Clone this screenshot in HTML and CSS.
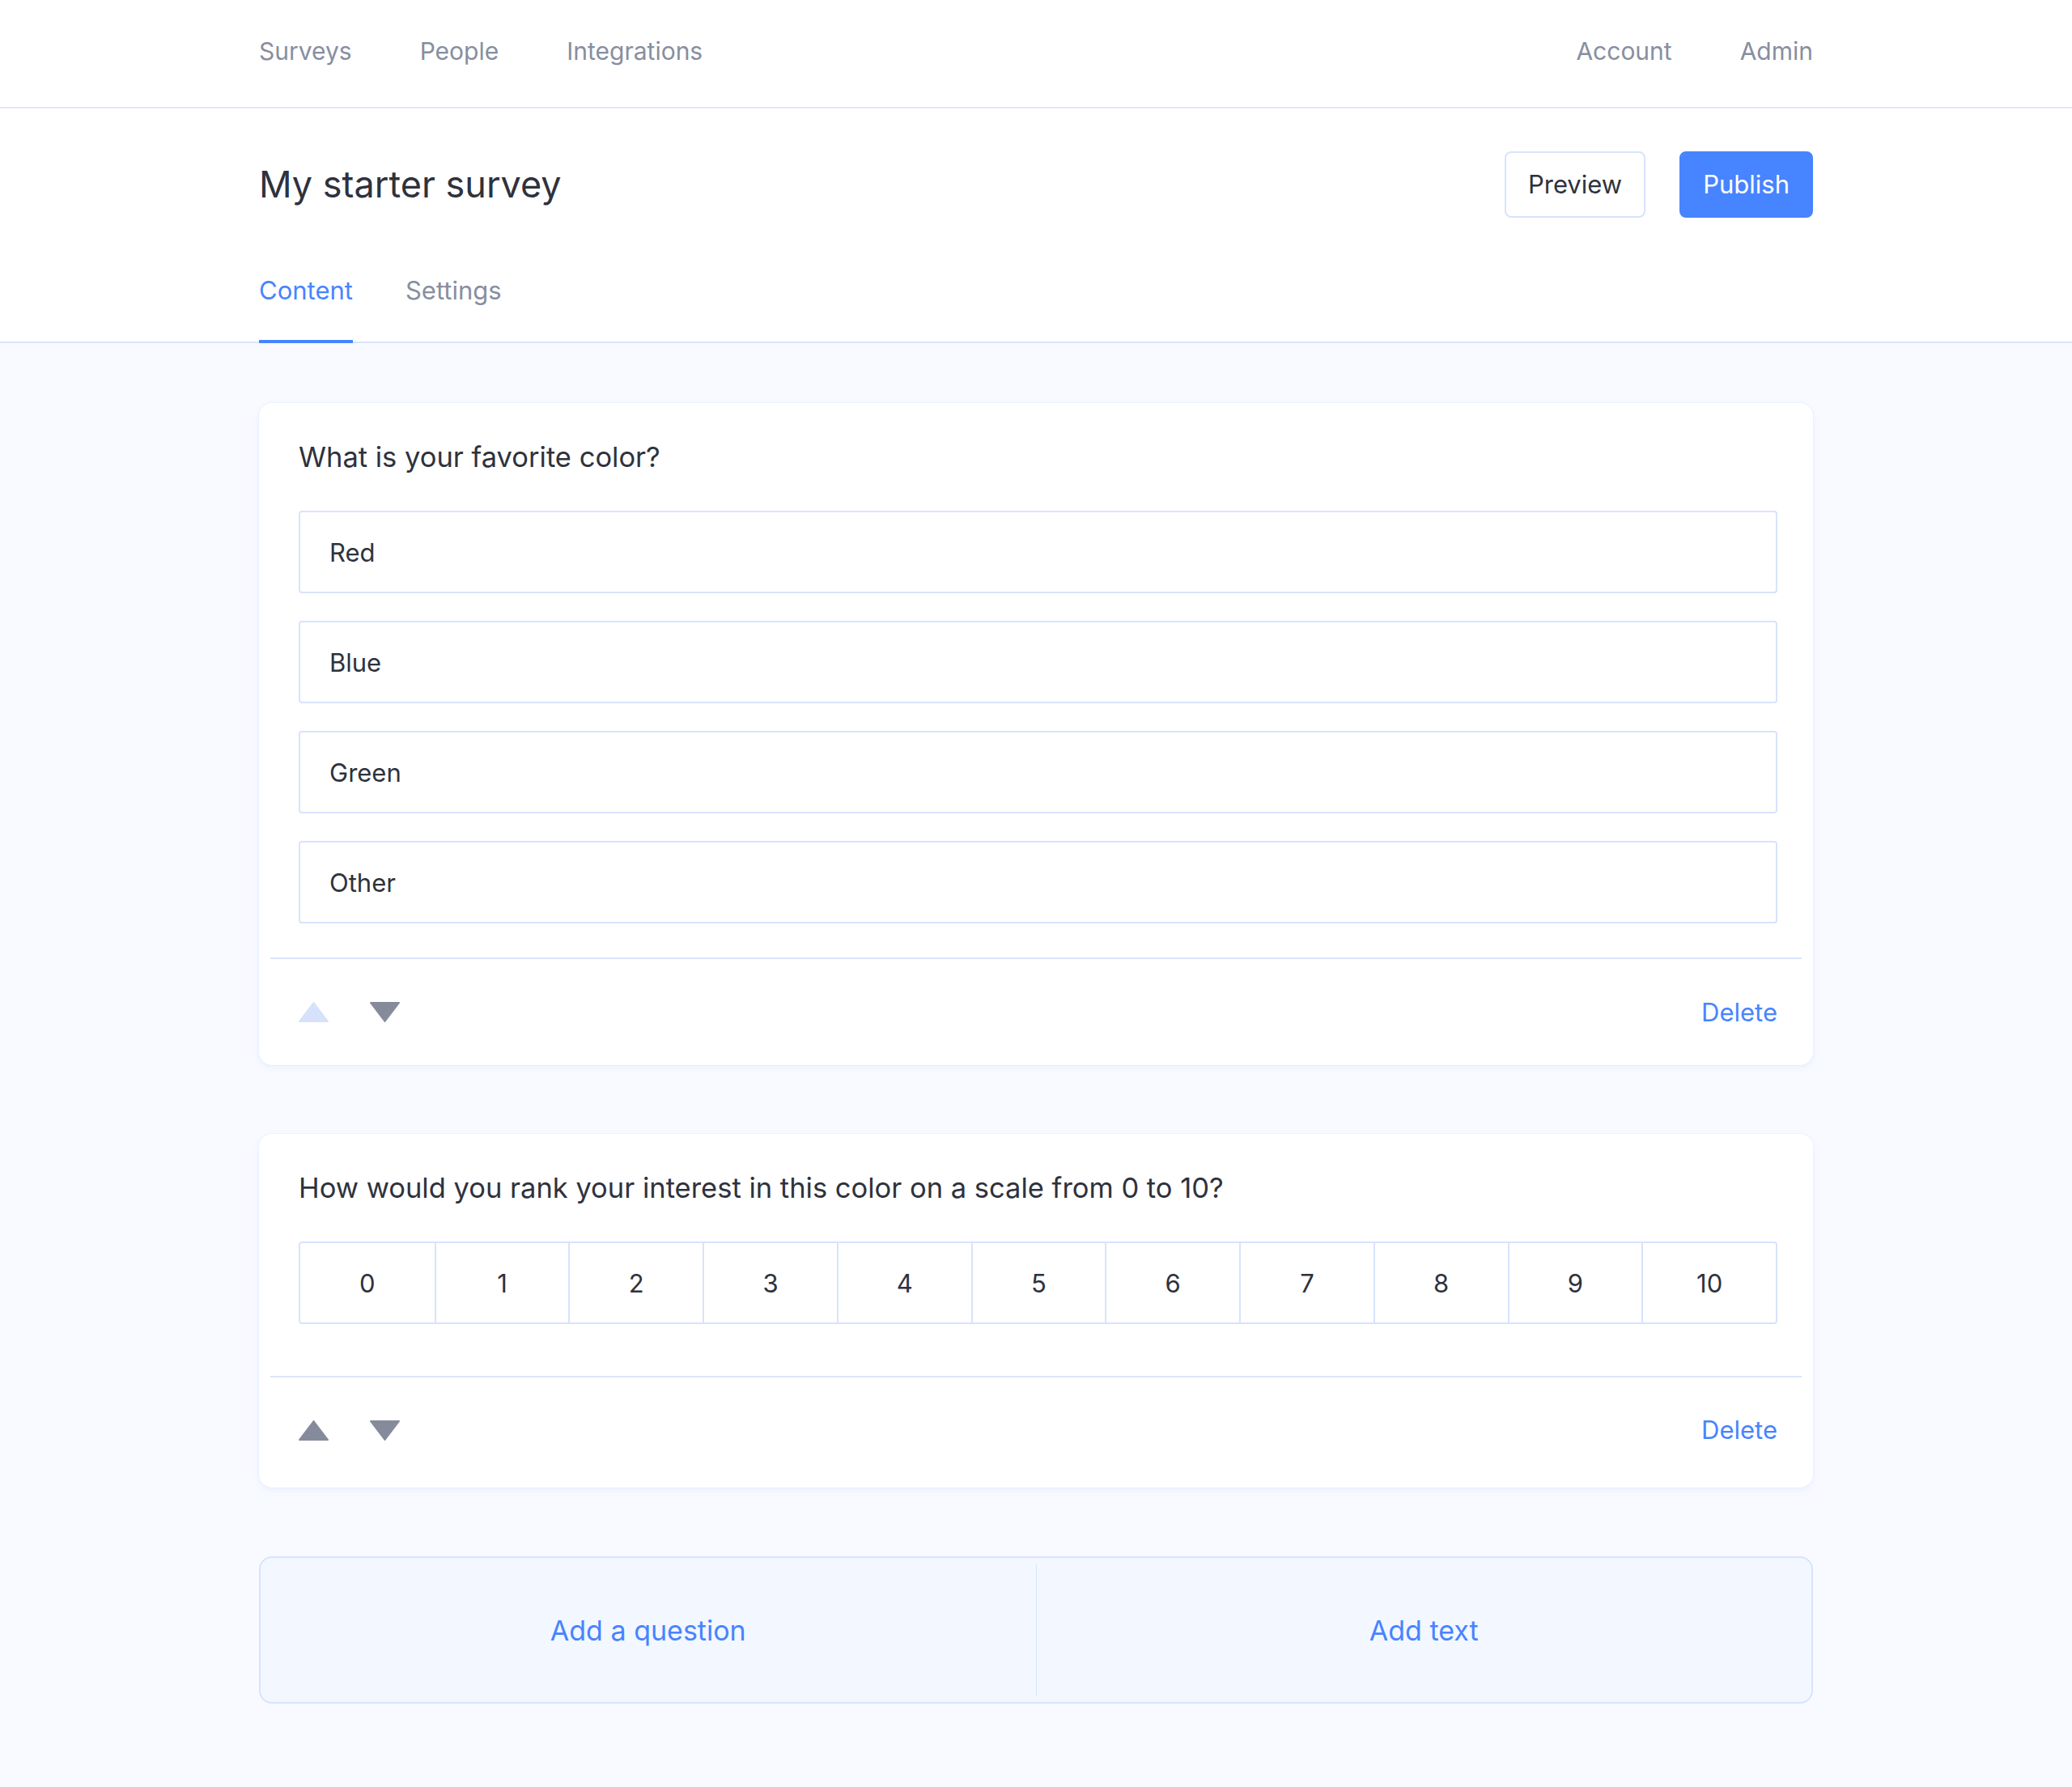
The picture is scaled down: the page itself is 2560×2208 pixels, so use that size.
FILE: index.html
```html
<!DOCTYPE html>
<html lang="en">
<head>
<meta charset="utf-8">
<title>My starter survey</title>
<link rel="stylesheet" href="styles.css">
</head>
<body>
<nav class="topnav">
  <div class="wrap nav-inner">
    <div class="nav-group">
      <a class="nav-link">Surveys</a>
      <a class="nav-link">People</a>
      <a class="nav-link">Integrations</a>
    </div>
    <div class="nav-group">
      <a class="nav-link">Account</a>
      <a class="nav-link">Admin</a>
    </div>
  </div>
</nav>

<header class="page-head">
  <div class="wrap">
    <div class="title-row">
      <h1 class="title">My starter survey</h1>
      <div class="actions">
        <button class="btn btn-outline">Preview</button>
        <button class="btn btn-primary">Publish</button>
      </div>
    </div>
    <div class="tabs">
      <a class="tab tab-active">Content</a>
      <a class="tab">Settings</a>
    </div>
  </div>
</header>

<main class="wrap main">
  <section class="card">
    <div class="card-body">
      <h2 class="question">What is your favorite color?</h2>
      <div class="options">
        <div class="option">Red</div>
        <div class="option">Blue</div>
        <div class="option">Green</div>
        <div class="option">Other</div>
      </div>
    </div>
    <div class="card-foot">
      <div class="arrows">
        <svg class="arrow arrow-disabled" viewBox="0 0 37 25" width="37" height="25"><polygon points="18.5,1 36,24 1,24"/></svg>
        <svg class="arrow" viewBox="0 0 37 25" width="37" height="25"><polygon points="1,1 36,1 18.5,24"/></svg>
      </div>
      <a class="delete">Delete</a>
    </div>
  </section>

  <section class="card">
    <div class="card-body card-body-scale">
      <h2 class="question">How would you rank your interest in this color on a scale from 0 to 10?</h2>
      <div class="scale">
        <div class="cell">0</div>
        <div class="cell">1</div>
        <div class="cell">2</div>
        <div class="cell">3</div>
        <div class="cell">4</div>
        <div class="cell">5</div>
        <div class="cell">6</div>
        <div class="cell">7</div>
        <div class="cell">8</div>
        <div class="cell">9</div>
        <div class="cell">10</div>
      </div>
    </div>
    <div class="card-foot card-foot-tall">
      <div class="arrows">
        <svg class="arrow" viewBox="0 0 37 25" width="37" height="25"><polygon points="18.5,1 36,24 1,24"/></svg>
        <svg class="arrow" viewBox="0 0 37 25" width="37" height="25"><polygon points="1,1 36,1 18.5,24"/></svg>
      </div>
      <a class="delete">Delete</a>
    </div>
  </section>

  <section class="add-box">
    <a class="add-item">Add a question</a>
    <span class="add-sep"></span>
    <a class="add-item">Add text</a>
  </section>
</main>
</body>
</html>
```

FILE: styles.css
```css
* { box-sizing: border-box; }

html, body {
  margin: 0;
  padding: 0;
}

body {
  background: #f8faff;
  font-family: Inter, "Liberation Sans", Arial, sans-serif;
  color: #2e323d;
}

a { cursor: pointer; }

.wrap {
  width: 1920px;
  margin: 0 auto;
}

/* top navigation */
.topnav {
  background: #ffffff;
  border-bottom: 2px solid #dfe7fb;
}

.nav-inner {
  height: 132px;
  padding-bottom: 6px;
  display: flex;
  align-items: center;
  justify-content: space-between;
}

.nav-group {
  display: flex;
  gap: 84px;
}

.nav-link {
  font-size: 30px;
  line-height: 40px;
  color: #878ea0;
}

/* page header */
.page-head {
  background: #ffffff;
  border-bottom: 2px solid #dbe5fb;
}

.page-head .wrap {
  padding-top: 53px;
}

.title-row {
  display: flex;
  align-items: center;
  justify-content: space-between;
  height: 82px;
}

.title {
  margin: 0;
  font-size: 45px;
  line-height: 56px;
  font-weight: 400;
  color: #2e323d;
}

.actions {
  display: flex;
  gap: 42px;
}

.btn {
  height: 82px;
  padding: 0 27px;
  border-radius: 8px;
  font-family: inherit;
  font-size: 31px;
  line-height: 40px;
  border: 2px solid #d8e3fc;
  background: #ffffff;
  color: #2e323d;
}

.btn-primary {
  background: #4784ff;
  border-color: #4784ff;
  color: #ffffff;
}

.tabs {
  display: flex;
  gap: 65px;
  margin-top: 70px;
}

.tab {
  font-size: 31px;
  line-height: 40px;
  padding-bottom: 41px;
  border-bottom: 4px solid transparent;
  margin-bottom: -2px;
  color: #878ea0;
}

.tab-active {
  color: #4784ff;
  border-bottom-color: #4784ff;
}

/* main content */
.main {
  padding: 74px 0 103px;
  display: flex;
  flex-direction: column;
  gap: 85px;
}

.card {
  background: #ffffff;
  border-radius: 16px;
  padding: 45px 14px 0;
  box-shadow: 0 0 0 1px rgba(71, 132, 255, 0.05), 0 3px 8px rgba(71, 132, 255, 0.08);
}

.card-body {
  padding: 0 30px 42px 35px;
}

.card-body-scale {
  padding-bottom: 64px;
}

.question {
  margin: 0 0 44px;
  font-size: 34.5px;
  line-height: 44px;
  font-weight: 400;
  color: #2e323d;
}

.options {
  display: flex;
  flex-direction: column;
  gap: 34px;
}

.option {
  height: 102px;
  border: 2px solid #d8e3fc;
  border-radius: 4px;
  padding: 0 36px;
  display: flex;
  align-items: center;
  font-size: 31px;
  color: #2e323d;
}

.scale {
  display: grid;
  grid-template-columns: repeat(11, 1fr);
  height: 102px;
  border: 2px solid #d8e3fc;
  border-radius: 4px;
}

.cell {
  display: flex;
  align-items: center;
  justify-content: center;
  font-size: 31px;
  color: #2e323d;
  border-left: 2px solid #d8e3fc;
}

.cell:first-child {
  border-left: none;
}

.card-foot {
  height: 133px;
  border-top: 2px solid #dbe5fb;
  display: flex;
  align-items: center;
  justify-content: space-between;
  padding: 0 30px 0 35px;
}

.card-foot-tall {
  height: 138px;
  padding-bottom: 6px;
}

.arrows {
  display: flex;
  gap: 51px;
}

.arrow {
  display: block;
  fill: #868b9c;
  stroke: #868b9c;
  stroke-width: 2;
  stroke-linejoin: round;
}

.arrow-disabled {
  fill: #d6e2fc;
  stroke: #d6e2fc;
}

.delete {
  font-size: 31px;
  line-height: 40px;
  color: #4784ff;
}

/* add box */
.add-box {
  height: 182px;
  border: 2px solid #d8e3fc;
  border-radius: 16px;
  background: #f3f7ff;
  display: flex;
  align-items: stretch;
  padding: 8px 0;
}

.add-item {
  flex: 1;
  display: flex;
  align-items: center;
  justify-content: center;
  font-size: 34px;
  color: #4784ff;
}

.add-sep {
  width: 1px;
  background: #d8e3fc;
}
```
